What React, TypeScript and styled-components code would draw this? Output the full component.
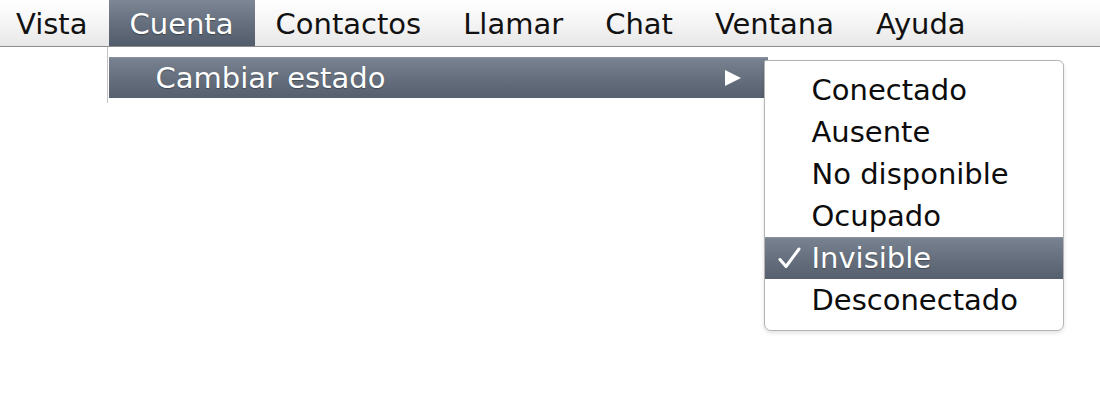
import styled, { createGlobalStyle } from "styled-components";

const GlobalStyle = createGlobalStyle`
    html, body {
        margin: 0;
        padding: 0;
        background: #ffffff;
    }
    body {
        font-family: "DejaVu Sans", "Noto Sans", sans-serif;
        width: 1100px;
        height: 410px;
        overflow: hidden;
    }
`;

const Menubar = styled.div`
    display: flex;
    align-items: stretch;
    height: 46px;
    margin-left: -5px;
    border-bottom: 1px solid #8e8e8e;
    background: linear-gradient(#ffffff 0%, #f6f6f6 45%, #e7e7e7 100%);
`;

const MenuSlot = styled.div`
    position: relative;
    display: flex;
`;

const MenuTitle = styled.div<{ $open?: boolean }>`
    display: flex;
    align-items: center;
    padding: 0 21px;
    font-size: 29px;
    line-height: 46px;
    padding-top: 1px;
    color: ${(p) => (p.$open ? "#ffffff" : "#111111")};
    background: ${(p) =>
        p.$open ? "linear-gradient(#7c8695 0%, #636d7b 55%, #515b69 100%)" : "none"};
    text-shadow: ${(p) => (p.$open ? "0 1px 1px rgba(0,0,0,0.35)" : "none")};
`;

const Dropdown = styled.div`
    position: absolute;
    top: 47px;
    left: -2px;
    width: 660px;
    padding: 10px 0 5px 0;
    background: #ffffff;
    border-left: 1px solid #c4c4c4;
`;

const Row = styled.div<{ $active?: boolean }>`
    position: relative;
    display: flex;
    align-items: center;
    height: 42px;
    font-size: 29px;
    color: ${(p) => (p.$active ? "#ffffff" : "#0c0c0c")};
    background: ${(p) =>
        p.$active
            ? "linear-gradient(#8a94a2 0px, #77818f 2px, #646e7c 55%, #555f6d 100%)"
            : "transparent"};
    text-shadow: ${(p) => (p.$active ? "0 1px 1px rgba(0,0,0,0.3)" : "none")};
`;

const ParentRow = styled(Row)`
    height: 41px;
    margin-left: 1px;
    padding-left: 47px;
    padding-right: 27px;
`;

const Label = styled.span`
    flex: 1;
    white-space: nowrap;
`;

const CheckCell = styled.span`
    display: flex;
    align-items: center;
    width: 47px;
    padding-left: 13px;
    box-sizing: border-box;
`;

const Submenu = styled.div`
    position: absolute;
    top: 13px;
    left: 656px;
    width: 298px;
    height: 261px;
    padding-top: 8px;
    background: #ffffff;
    border: 1px solid #b4b4b4;
    border-radius: 2px 6px 7px 7px;
    box-shadow: 0 2px 4px rgba(0, 0, 0, 0.12);
`;

const ArrowIcon = () => (
    <svg width="16" height="16" viewBox="0 0 16 16">
        <polygon points="0,0 16,8 0,16" fill="#ffffff" />
    </svg>
);

const CheckIcon = () => (
    <svg width="23" height="22" viewBox="0 0 23 22">
        <path
            d="M2 12.5 L8 19.5 L21 2"
            fill="none"
            stroke="#ffffff"
            strokeWidth="3"
            strokeLinecap="round"
            strokeLinejoin="round"
        />
    </svg>
);

export default function App() {
    const titles = ["Vista", "Cuenta", "Contactos", "Llamar", "Chat", "Ventana", "Ayuda"];
    const states = [
        { name: "Conectado", checked: false },
        { name: "Ausente", checked: false },
        { name: "No disponible", checked: false },
        { name: "Ocupado", checked: false },
        { name: "Invisible", checked: true },
        { name: "Desconectado", checked: false },
    ];

    return (
        <>
            <GlobalStyle />
            <Menubar>
                {titles.map((t) => (
                    <MenuSlot key={t}>
                        <MenuTitle $open={t === "Cuenta"}>{t}</MenuTitle>
                        {t === "Cuenta" && (
                            <Dropdown>
                                <ParentRow $active>
                                    <Label>Cambiar estado</Label>
                                    <ArrowIcon />
                                </ParentRow>
                                <Submenu>
                                    {states.map((s) => (
                                        <Row key={s.name} $active={s.checked}>
                                            <CheckCell>{s.checked && <CheckIcon />}</CheckCell>
                                            <Label>{s.name}</Label>
                                        </Row>
                                    ))}
                                </Submenu>
                            </Dropdown>
                        )}
                    </MenuSlot>
                ))}
            </Menubar>
        </>
    );
}
